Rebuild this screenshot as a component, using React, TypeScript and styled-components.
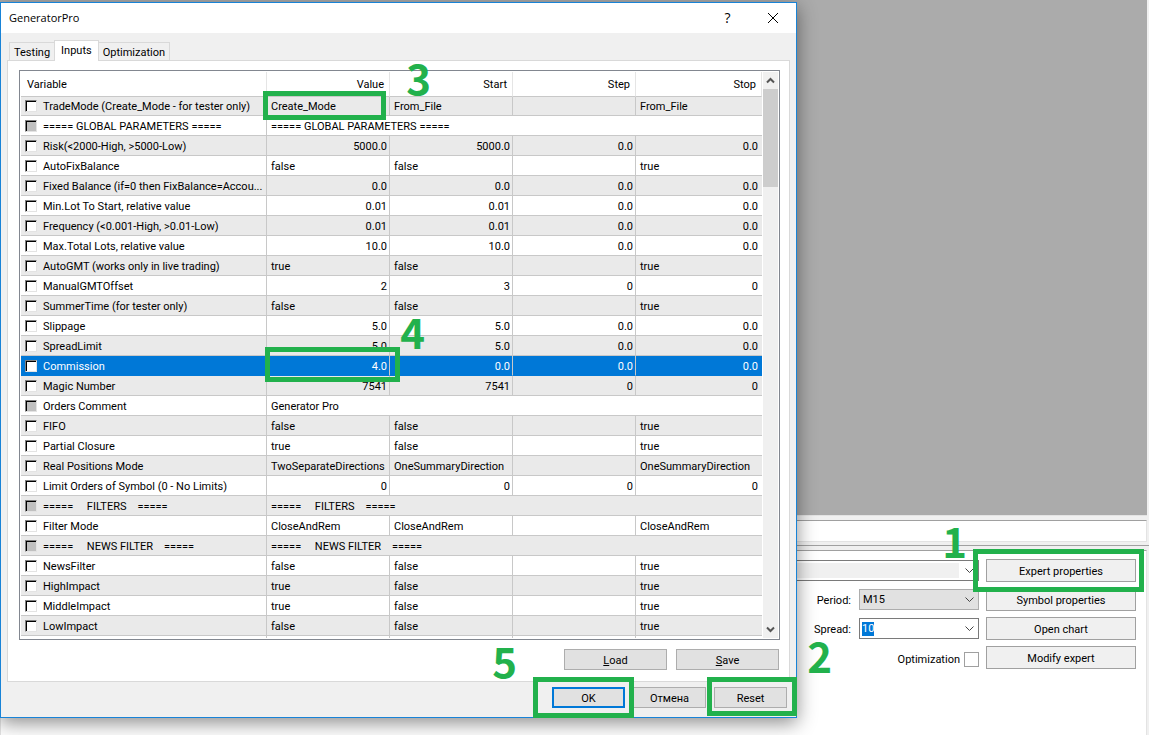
import React, { useEffect, useRef, useState } from "react";
import styled, { createGlobalStyle, css } from "styled-components";

const GREEN = "#22b14c";
const BLUE = "#0078d7";
const LINE = "#c8c8c8";

const GlobalStyle = createGlobalStyle`
  *, *::before, *::after { box-sizing: border-box; }
  body { margin: 0; background: #f0f0f0; }
  body, button, input, select {
    font-family: Roboto, "Liberation Sans", sans-serif;
    font-size: 11px;
    line-height: 14px;
    color: #000;
  }
`;

const Desktop = styled.div`
  position: relative;
  display: flex;
  flex-direction: column;
  min-height: 100vh;
  overflow: hidden;
`;

/* Terminal window behind the dialog */

const Workspace = styled.div`
  flex: 1;
  min-height: 200px;
  margin-right: 2px;
  background: #ababab;
  border-bottom: 1px solid #e3e3e3;
`;

const StatusStrip = styled.div`
  margin: 4px 2px 0 0;
  height: 22px;
  background: #fff;
  border: 1px solid #e3e3e3;
  border-top-color: #a0a0a0;
`;

const Splitter = styled.div`
  margin-top: 3px;
  height: 5px;
  border-top: 1px solid #a0a0a0;
`;

const TesterPanel = styled.section`
  position: relative;
  display: flex;
  justify-content: flex-end;
  gap: 7px;
  min-height: 185px;
  margin-right: 2px;
  padding: 8px 10px 0 0;
  background: #fff;
  border: 1px solid #e3e3e3;
  border-top-color: #a0a0a0;
  border-bottom: 0;
`;

const Settings = styled.div`
  flex: 1;
  display: flex;
  flex-direction: column;
  align-items: flex-end;
  gap: 8px;
  padding-top: 1px;
`;

const Actions = styled.div`
  display: flex;
  flex-direction: column;
  gap: 6px;
  width: 150px;
`;

const PanelButton = styled.button`
  height: 23px;
  padding: 2px 0 0;
  background: #f0f0f0;
  border: 1px solid #a0a0a0;
`;

const SettingRow = styled.div`
  display: flex;
  align-items: center;
  gap: 8px;
  height: 21px;
  & > label { padding-top: 2px; }
`;

const ComboFrame = styled.div<{ $wide?: boolean; $muted?: boolean }>`
  position: relative;
  display: flex;
  width: ${(p) => (p.$wide ? "100%" : "120px")};
  height: 21px;
  padding: 2px 19px 2px 2px;
  background: ${(p) => (p.$muted ? "#e1e1e1" : "#fff")};
  border: 1px solid ${(p) => (p.$muted ? "#adadad" : "#7a7a7a")};
`;

const comboField = css`
  flex: 1;
  min-width: 0;
  margin: 0;
  border: 0;
  outline: 0;
  border-radius: 0;
  background: transparent;
  appearance: none;
`;

const ComboSelect = styled.select<{ $filled?: boolean }>`
  ${comboField}
  padding: 0 1px;
  background: ${(p) => (p.$filled ? "#f0f0f0" : "transparent")};
`;

const ComboInput = styled.input`
  ${comboField}
  padding: 0;
  &::selection {
    background: ${BLUE};
    color: #fff;
  }
`;

const ComboArrow = styled.svg`
  position: absolute;
  right: 4px;
  top: 6px;
  pointer-events: none;
`;

const OptimizationRow = styled.label`
  display: flex;
  align-items: flex-end;
  gap: 4px;
  padding-top: 5px;
`;

const FlatCheck = styled.input`
  appearance: none;
  width: 15px;
  height: 15px;
  margin: 0;
  background: #fff;
  border: 1px solid #a0a0a0;
`;

/* Dialog */

const Dialog = styled.section`
  position: absolute;
  top: 2px;
  left: 0;
  right: 352px;
  background: #f0f0f0;
  border: 1px solid #1883d7;
  box-shadow: 0 5px 18px rgba(0, 0, 0, 0.45);
`;

const TitleBar = styled.header`
  display: flex;
  align-items: center;
  height: 30px;
  padding: 0 16px 0 8px;
  background: #fff;
`;

const Title = styled.h1`
  flex: 1;
  margin: 0;
  font: 400 11px/16px "Open Sans", "Noto Sans", sans-serif;
`;

const CaptionButton = styled.button`
  display: flex;
  align-items: center;
  justify-content: center;
  width: 15px;
  height: 20px;
  margin-left: 30px;
  padding: 0;
  border: 0;
  background: none;
  font: 400 14px/16px "Open Sans", "Noto Sans", sans-serif;
`;

const Tabs = styled.div`
  position: relative;
  z-index: 1;
  display: flex;
  align-items: flex-end;
  height: 28px;
  padding-left: 8px;
`;

const Tab = styled.button<{ $active?: boolean }>`
  padding: ${(p) => (p.$active ? "2px 6px 3px" : "2px 4px 0")};
  height: ${(p) => (p.$active ? "21px" : "19px")};
  background: ${(p) => (p.$active ? "#fff" : "#f0f0f0")};
  border: 1px solid #d9d9d9;
  border-bottom: ${(p) => (p.$active ? "0" : "1px solid #d9d9d9")};
  & + & { margin-left: -1px; }
`;

const TabPage = styled.div`
  margin: -1px 6px 0;
  padding: 9px 9px 11px 11px;
  background: #fff;
  border: 1px solid #d9d9d9;
`;

const ListBox = styled.div`
  display: flex;
  padding: 1px;
  background: #fff;
  border: 1px solid #828790;
`;

const Grid = styled.table`
  flex: 1;
  width: 0;
  table-layout: fixed;
  border-collapse: separate;
  border-spacing: 0;
`;

const Col = styled.col<{ $w?: number }>`
  ${(p) => p.$w && `width: ${p.$w}px;`}
`;

const HeadCell = styled.th<{ $left?: boolean }>`
  height: 25px;
  padding: 2px 5px 0 6px;
  font-weight: 400;
  text-align: ${(p) => (p.$left ? "left" : "right")};
  border-right: 1px solid #e5e5e5;
  border-bottom: 1px solid ${LINE};
`;

const Row = styled.tr<{ $selected?: boolean }>`
  height: 20px;
  background: ${(p) => (p.$selected ? BLUE : "#fff")};
  color: ${(p) => (p.$selected ? "#fff" : "#000")};
  &:first-child { height: 19px; }
  &:nth-child(odd) { background: #eaeaea; }
  & > td { border-bottom-color: ${(p) => (p.$selected ? BLUE : LINE)}; }
`;

const Cell = styled.td<{ $num?: boolean }>`
  padding: 2px 2px 0 4px;
  white-space: pre;
  overflow: hidden;
  text-align: ${(p) => (p.$num ? "right" : "left")};
  border-right: 1px solid ${LINE};
  border-bottom: 1px solid ${LINE};
  &:last-child { border-right: 0; padding-right: 4px; }
`;

const TailCell = styled.td`
  height: 2px;
  padding: 0;
  border-right: 1px solid ${LINE};
  &:last-child { border-right: 0; }
`;

const NameLabel = styled.label`
  display: flex;
  align-items: flex-start;
  gap: 6px;
`;

const SunkenCheck = styled.input`
  appearance: none;
  flex: none;
  width: 12px;
  height: 12px;
  margin: 0;
  background: #fff;
  border: 1px solid;
  border-color: #808080 #e3e3e3 #e3e3e3 #808080;
  box-shadow: inset 1px 1px 0 #000;
  &:disabled { background: #c0c0c0; }
`;

const ScrollBar = styled.div`
  display: flex;
  flex-direction: column;
  width: 15px;
  margin-left: 1px;
  background: #f0f0f0;
`;

const ScrollButton = styled.button`
  display: flex;
  align-items: center;
  justify-content: center;
  height: 17px;
  padding: 0;
  border: 0;
  background: none;
`;

const ScrollTrack = styled.div`
  flex: 1;
`;

const ScrollThumb = styled.div`
  height: 98px;
  background: #cdcdcd;
`;

const ButtonRow = styled.div<{ $footer?: boolean }>`
  display: flex;
  justify-content: flex-end;
  gap: ${(p) => (p.$footer ? "8px" : "9px")};
  padding: ${(p) => (p.$footer ? "5px 9px 9px" : "9px 1px 0 0")};
`;

const DialogButton = styled.button<{ $wide?: boolean; $primary?: boolean }>`
  width: ${(p) => (p.$wide ? "103px" : "73px")};
  height: 21px;
  padding: 2px 0 0;
  background: #e1e1e1;
  border: ${(p) => (p.$primary ? `2px solid ${BLUE}` : "1px solid #adadad")};
`;

/* Green tutorial marks drawn over the windows */

interface Spot {
  $top: number;
  $right: number;
}

const MarkBox = styled.div<Spot & { $w: number; $h: number }>`
  position: absolute;
  z-index: 2;
  top: ${(p) => p.$top}px;
  right: ${(p) => p.$right}px;
  width: ${(p) => p.$w}px;
  height: ${(p) => p.$h}px;
  border: 5px solid ${GREEN};
  pointer-events: none;
`;

const MarkNumber = styled.span<Spot>`
  position: absolute;
  z-index: 2;
  top: ${(p) => p.$top}px;
  right: ${(p) => p.$right}px;
  color: ${GREEN};
  font: 700 42px/32px "Noto Sans CJK JP", "Open Sans", sans-serif;
  pointer-events: none;
`;

type Param = {
  name: string;
  values: string[];
  locked?: boolean;
};

const params: Param[] = [
  { name: "TradeMode (Create_Mode - for tester only)", values: ["Create_Mode", "From_File", "", "From_File"] },
  { name: "===== GLOBAL PARAMETERS =====", values: ["===== GLOBAL PARAMETERS ====="], locked: true },
  { name: "Risk(<2000-High, >5000-Low)", values: ["5000.0", "5000.0", "0.0", "0.0"] },
  { name: "AutoFixBalance", values: ["false", "false", "", "true"] },
  { name: "Fixed Balance (if=0 then FixBalance=Accou...", values: ["0.0", "0.0", "0.0", "0.0"] },
  { name: "Min.Lot To Start, relative value", values: ["0.01", "0.01", "0.0", "0.0"] },
  { name: "Frequency (<0.001-High, >0.01-Low)", values: ["0.01", "0.01", "0.0", "0.0"] },
  { name: "Max.Total Lots, relative value", values: ["10.0", "10.0", "0.0", "0.0"] },
  { name: "AutoGMT (works only in live trading)", values: ["true", "false", "", "true"] },
  { name: "ManualGMTOffset", values: ["2", "3", "0", "0"] },
  { name: "SummerTime (for tester only)", values: ["false", "false", "", "true"] },
  { name: "Slippage", values: ["5.0", "5.0", "0.0", "0.0"] },
  { name: "SpreadLimit", values: ["5.0", "5.0", "0.0", "0.0"] },
  { name: "Commission", values: ["4.0", "0.0", "0.0", "0.0"] },
  { name: "Magic Number", values: ["7541", "7541", "0", "0"] },
  { name: "Orders Comment", values: ["Generator Pro"], locked: true },
  { name: "FIFO", values: ["false", "false", "", "true"] },
  { name: "Partial Closure", values: ["true", "false", "", "true"] },
  { name: "Real Positions Mode", values: ["TwoSeparateDirections", "OneSummaryDirection", "", "OneSummaryDirection"] },
  { name: "Limit Orders of Symbol (0 - No Limits)", values: ["0", "0", "0", "0"] },
  { name: "=====     FILTERS    =====", values: ["=====     FILTERS    ====="], locked: true },
  { name: "Filter Mode", values: ["CloseAndRem", "CloseAndRem", "", "CloseAndRem"] },
  { name: "=====     NEWS FILTER    =====", values: ["=====     NEWS FILTER    ====="], locked: true },
  { name: "NewsFilter", values: ["false", "false", "", "true"] },
  { name: "HighImpact", values: ["true", "false", "", "true"] },
  { name: "MiddleImpact", values: ["true", "false", "", "true"] },
  { name: "LowImpact", values: ["false", "false", "", "true"] },
];

const isNumeric = (v: string) => /^\d/.test(v);

const Arrow = () => (
  <ComboArrow width="9" height="7" viewBox="0 0 9 7" fill="none" stroke="#444" aria-hidden="true">
    <path d="M0.5 1.5L4.5 5.5L8.5 1.5" />
  </ComboArrow>
);

const ScrollChevron = ({ down }: { down?: boolean }) => (
  <svg width="9" height="7" viewBox="0 0 9 7" fill="none" stroke="#555" strokeWidth="2" aria-hidden="true">
    <path d={down ? "M1 1.5L4.5 5L8 1.5" : "M1 5.5L4.5 2L8 5.5"} />
  </svg>
);

function InputsTable({ selected }: { selected: string }) {
  return (
    <Grid>
      <colgroup>
        <Col />
        <Col $w={123} />
        <Col $w={123} />
        <Col $w={123} />
        <Col $w={126} />
      </colgroup>
      <thead>
        <tr>
          <HeadCell $left scope="col">Variable</HeadCell>
          {["Value", "Start", "Step", "Stop"].map((h) => (
            <HeadCell key={h} scope="col">{h}</HeadCell>
          ))}
        </tr>
      </thead>
      <tbody>
        {params.map((p) => (
          <Row key={p.name} $selected={p.name === selected}>
            <Cell>
              <NameLabel>
                <SunkenCheck type="checkbox" disabled={p.locked} />
                <span>{p.name}</span>
              </NameLabel>
            </Cell>
            {p.values.map((v, i) => (
              <Cell key={i} $num={isNumeric(v)} colSpan={p.locked ? 4 : 1}>{v}</Cell>
            ))}
          </Row>
        ))}
        <tr>
          {[0, 1, 2, 3, 4].map((i) => (
            <TailCell key={i} />
          ))}
        </tr>
      </tbody>
    </Grid>
  );
}

function Tester() {
  const spread = useRef<HTMLInputElement>(null);
  const [value, setValue] = useState("10");
  useEffect(() => {
    spread.current?.focus();
    spread.current?.select();
  }, []);

  return (
    <TesterPanel>
      <Settings>
        <ComboFrame $wide>
          <ComboSelect $filled aria-label="Expert" />
          <Arrow />
        </ComboFrame>
        <SettingRow>
          <label htmlFor="period">Period:</label>
          <ComboFrame $muted>
            <ComboSelect id="period" defaultValue="M15">
              <option>M15</option>
            </ComboSelect>
            <Arrow />
          </ComboFrame>
        </SettingRow>
        <SettingRow>
          <label htmlFor="spread">Spread:</label>
          <ComboFrame>
            <ComboInput id="spread" ref={spread} value={value} onChange={(e) => setValue(e.target.value)} />
            <Arrow />
          </ComboFrame>
        </SettingRow>
        <OptimizationRow>
          Optimization
          <FlatCheck type="checkbox" />
        </OptimizationRow>
      </Settings>
      <Actions>
        <PanelButton type="button">Expert properties</PanelButton>
        <PanelButton type="button">Symbol properties</PanelButton>
        <PanelButton type="button">Open chart</PanelButton>
        <PanelButton type="button">Modify expert</PanelButton>
      </Actions>
      <MarkBox $top={-2} $right={2} $w={171} $h={43} />
      <MarkNumber $top={-27} $right={179}>1</MarkNumber>
      <MarkNumber $top={88} $right={314}>2</MarkNumber>
    </TesterPanel>
  );
}

export default function App() {
  return (
    <Desktop>
      <GlobalStyle />
      <Workspace />
      <StatusStrip />
      <Splitter />
      <Tester />

      <Dialog role="dialog" aria-labelledby="dialog-title">
        <TitleBar>
          <Title id="dialog-title">GeneratorPro</Title>
          <CaptionButton type="button">?</CaptionButton>
          <CaptionButton type="button" aria-label="Close">
            <svg width="12" height="12" viewBox="0 0 12 12" stroke="#000" aria-hidden="true">
              <path d="M1 1L11 11M11 1L1 11" />
            </svg>
          </CaptionButton>
        </TitleBar>
        <Tabs>
          <Tab type="button">Testing</Tab>
          <Tab type="button" $active>Inputs</Tab>
          <Tab type="button">Optimization</Tab>
        </Tabs>
        <TabPage>
          <ListBox>
            <InputsTable selected="Commission" />
            <ScrollBar>
              <ScrollButton type="button" aria-label="Scroll up"><ScrollChevron /></ScrollButton>
              <ScrollTrack><ScrollThumb /></ScrollTrack>
              <ScrollButton type="button" aria-label="Scroll down"><ScrollChevron down /></ScrollButton>
            </ScrollBar>
          </ListBox>
          <ButtonRow>
            <DialogButton type="button" $wide><u>L</u>oad</DialogButton>
            <DialogButton type="button" $wide><u>S</u>ave</DialogButton>
          </ButtonRow>
        </TabPage>
        <ButtonRow $footer>
          <DialogButton type="button" $primary>OK</DialogButton>
          <DialogButton type="button">Отмена</DialogButton>
          <DialogButton type="button">Reset</DialogButton>
        </ButtonRow>

        <MarkBox $top={88} $right={410} $w={123} $h={29} />
        <MarkBox $top={344} $right={396} $w={135} $h={35} />
        <MarkBox $top={674} $right={162} $w={101} $h={41} />
        <MarkBox $top={674} $right={-1} $w={90} $h={39} />
        <MarkNumber $top={58} $right={365}>3</MarkNumber>
        <MarkNumber $top={312} $right={371}>4</MarkNumber>
        <MarkNumber $top={641} $right={279}>5</MarkNumber>
      </Dialog>
    </Desktop>
  );
}
